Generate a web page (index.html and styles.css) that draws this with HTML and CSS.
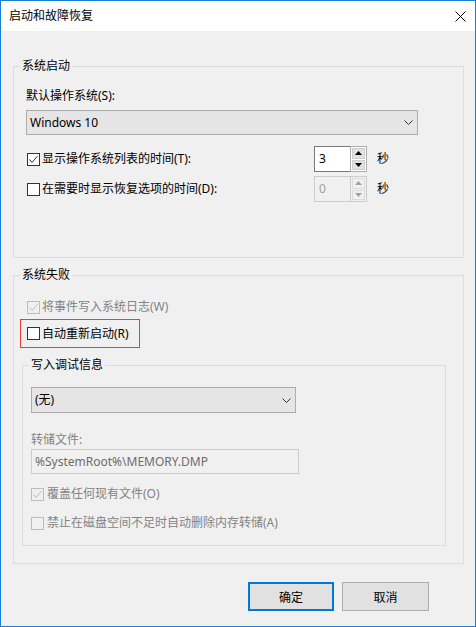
FILE: index.html
```html
<!DOCTYPE html>
<html lang="zh-CN">
<head>
<meta charset="utf-8">
<title>启动和故障恢复</title>
<link rel="stylesheet" href="styles.css">
</head>
<body>
<div class="window">
  <div class="titlebar">
    <span class="title">启动和故障恢复</span>
    <svg class="close" width="11" height="11" viewBox="0 0 11 11"><path d="M0.5 0.5 L10.5 10.5 M10.5 0.5 L0.5 10.5" stroke="#000" stroke-width="1" fill="none"/></svg>
  </div>
  <div class="client">
    <div class="group g1">
      <span class="legend">系统启动</span>
      <div class="label">默认操作系统(S):</div>
      <div class="select sel1">
        <span>Windows 10</span>
        <svg class="chev" width="9" height="5" viewBox="0 0 9 5"><path d="M0.5 0.5 L4.5 4.5 L8.5 0.5" stroke="#333" stroke-width="1" fill="none"/></svg>
      </div>
      <div class="spinrow first">
        <div class="check"><span class="box"><svg width="11" height="11" viewBox="0 0 11 11"><path d="M1.5 5.5 L4 8.5 L9.5 2" stroke="#333" stroke-width="1" fill="none"/></svg></span><span>显示操作系统列表的时间(T):</span></div>
        <div class="spinner">
          <div class="spin-text">3</div>
          <div class="spin-btns">
            <div class="spin-btn"><svg width="7" height="4" viewBox="0 0 7 4"><path d="M0 4 L3.5 0 L7 4 Z" fill="#000"/></svg></div>
            <div class="spin-btn"><svg width="7" height="4" viewBox="0 0 7 4"><path d="M0 0 L3.5 4 L7 0 Z" fill="#000"/></svg></div>
          </div>
        </div>
        <span class="unit">秒</span>
      </div>
      <div class="spinrow second">
        <div class="check"><span class="box"></span><span>在需要时显示恢复选项的时间(D):</span></div>
        <div class="spinner disabled">
          <div class="spin-text">0</div>
          <div class="spin-btns">
            <div class="spin-btn"><svg width="7" height="4" viewBox="0 0 7 4"><path d="M0 4 L3.5 0 L7 4 Z" fill="#a0a0a0"/></svg></div>
            <div class="spin-btn"><svg width="7" height="4" viewBox="0 0 7 4"><path d="M0 0 L3.5 4 L7 0 Z" fill="#a0a0a0"/></svg></div>
          </div>
        </div>
        <span class="unit">秒</span>
      </div>
    </div>

    <div class="group g2">
      <span class="legend">系统失败</span>
      <div class="check disabled row-log"><span class="box"><svg width="11" height="11" viewBox="0 0 11 11"><path d="M1.5 5.5 L4 8.5 L9.5 2" stroke="#bcbcbc" stroke-width="1" fill="none"/></svg></span><span>将事件写入系统日志(W)</span></div>
      <div class="highlight">
        <div class="check"><span class="box"></span><span>自动重新启动(R)</span></div>
      </div>
      <div class="group g3">
        <span class="legend">写入调试信息</span>
        <div class="select sel2">
          <span>(无)</span>
          <svg class="chev" width="9" height="5" viewBox="0 0 9 5"><path d="M0.5 0.5 L4.5 4.5 L8.5 0.5" stroke="#333" stroke-width="1" fill="none"/></svg>
        </div>
        <div class="label dim dump-label">转储文件:</div>
        <div class="textbox">%SystemRoot%\MEMORY.DMP</div>
        <div class="check disabled row-ow"><span class="box"><svg width="11" height="11" viewBox="0 0 11 11"><path d="M1.5 5.5 L4 8.5 L9.5 2" stroke="#bcbcbc" stroke-width="1" fill="none"/></svg></span><span>覆盖任何现有文件(O)</span></div>
        <div class="check disabled row-del"><span class="box"></span><span>禁止在磁盘空间不足时自动删除内存转储(A)</span></div>
      </div>
    </div>

    <div class="buttons">
      <button class="btn ok">确定</button>
      <button class="btn cancel">取消</button>
    </div>
  </div>
</div>
</body>
</html>
```

FILE: styles.css
```css
html, body {
  margin: 0;
  padding: 0;
}
body {
  font-family: "Noto Sans", "Noto Sans CJK SC", sans-serif;
  font-size: 12px;
  line-height: 16px;
  color: #000;
  background: #f0f0f0;
}
.window {
  width: 476px;
  height: 627px;
  box-sizing: border-box;
  border: 1px solid #1a7fd4;
  display: flex;
  flex-direction: column;
}
.titlebar {
  height: 30px;
  flex: none;
  background: #fff;
  display: flex;
  align-items: center;
  justify-content: space-between;
  padding: 0 9px 0 8px;
}
.close {
  display: block;
  margin-top: 1px;
}
.client {
  flex: 1;
  background: #f0f0f0;
  display: flex;
  flex-direction: column;
  padding: 0 11px 0 12px;
}
.group {
  position: relative;
  border: 1px solid #dcdcdc;
  display: flex;
  flex-direction: column;
  align-items: flex-start;
}
.legend {
  position: absolute;
  top: -9px;
  left: 6px;
  padding: 0 2px;
  background: #f0f0f0;
  line-height: 16px;
  white-space: nowrap;
}
.g1 {
  margin-top: 35px;
  padding: 21px 12px 55px 12px;
}
.label {
  height: 16px;
  white-space: nowrap;
}
.dim {
  color: #838383;
}
.select {
  box-sizing: border-box;
  border: 1px solid #adadad;
  background: #e5e5e5;
  display: flex;
  align-items: center;
  justify-content: space-between;
  padding: 0 4px 0 3px;
}
.sel1 {
  margin-top: 6px;
  width: 392px;
  height: 25px;
}
.chev {
  display: block;
}
.spinrow {
  display: grid;
  grid-template-columns: 288px 53px auto;
  align-items: center;
  height: 26px;
}
.spinrow.first {
  margin-top: 11px;
}
.spinrow.second {
  margin-top: 4px;
}
.unit {
  margin-left: 10px;
}
.check {
  display: flex;
  align-items: center;
  height: 16px;
  white-space: nowrap;
}
.box {
  box-sizing: border-box;
  width: 13px;
  height: 13px;
  border: 1px solid #333;
  background: #fff;
  margin-left: 1px;
  margin-right: 2px;
  flex: none;
  display: flex;
  align-items: center;
  justify-content: center;
}
.box svg {
  display: block;
}
.check.disabled {
  color: #838383;
}
.check.disabled .box {
  border-color: #bcbcbc;
  background: #f0f0f0;
}
.spinner {
  display: flex;
  height: 26px;
  box-sizing: border-box;
}
.spin-text {
  box-sizing: border-box;
  width: 36px;
  height: 26px;
  border: 1px solid #7a7a7a;
  border-right: none;
  background: #fff;
  padding: 4px 0 0 4px;
}
.spin-btns {
  box-sizing: border-box;
  width: 17px;
  height: 26px;
  border: 1px solid #adadad;
  background: #fff;
  display: flex;
  flex-direction: column;
  gap: 1px;
  padding: 1px;
}
.spin-btn {
  flex: 1;
  background: #e1e1e1;
  border: 1px solid #cfcfcf;
  display: flex;
  align-items: center;
  justify-content: center;
}
.spin-btn svg {
  display: block;
}
.spinner.disabled .spin-text {
  background: #f0f0f0;
  border-color: #cccccc;
  color: #a0a0a0;
}
.spinner.disabled .spin-btns {
  border-color: #cccccc;
  background: #f0f0f0;
}
.spinner.disabled .spin-btn {
  background: #f0f0f0;
  border-color: #dcdcdc;
}
.g2 {
  margin-top: 17px;
  padding: 23px 12px 17px 12px;
}
.highlight {
  box-sizing: border-box;
  margin-top: 4px;
  margin-left: -6px;
  width: 120px;
  height: 29px;
  border: 1px solid #ef3b3b;
  display: flex;
  align-items: center;
  padding-left: 5px;
}
.g3 {
  margin-top: 17px;
  margin-left: -4px;
  width: 424px;
  box-sizing: border-box;
  padding: 21px 8px 14px 8px;
}
.sel2 {
  width: 265px;
  height: 26px;
}
.dump-label {
  margin-top: 19px;
}
.textbox {
  box-sizing: border-box;
  margin-top: 1px;
  width: 268px;
  height: 25px;
  border: 1px solid #cccccc;
  background: #f0f0f0;
  color: #6d6d6d;
  padding: 4px 3px 0 3px;
  white-space: nowrap;
}
.g3 .box {
  margin-left: 0;
  margin-right: 3px;
}
.row-ow {
  margin-top: 12px;
}
.row-del {
  margin-top: 13px;
}
.buttons {
  margin-top: 18px;
  display: flex;
  justify-content: flex-end;
  gap: 8px;
  padding-right: 35px;
}
.btn {
  box-sizing: border-box;
  height: 29px;
  font-family: inherit;
  font-size: 12px;
  color: #000;
  background: #e1e1e1;
  margin: 0;
  padding: 0;
}
.ok {
  width: 86px;
  border: 2px solid #0078d7;
}
.cancel {
  width: 87px;
  border: 1px solid #adadad;
}
```
